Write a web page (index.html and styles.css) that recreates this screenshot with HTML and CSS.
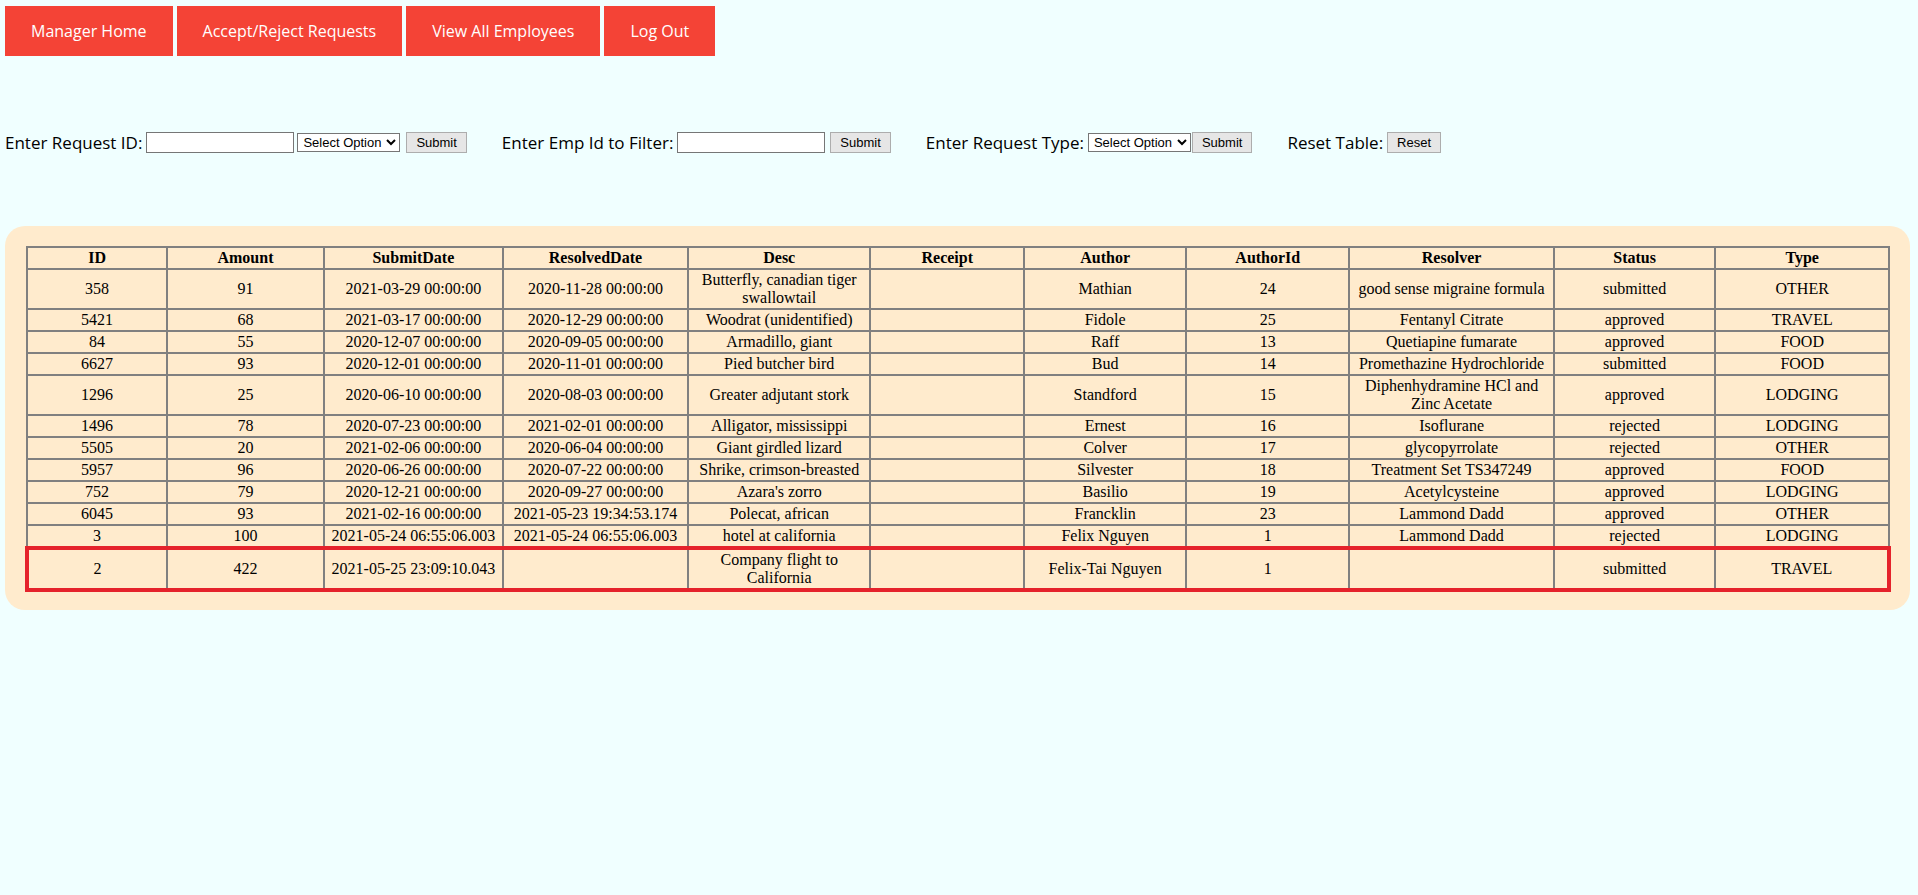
FILE: index.html
```html
<!DOCTYPE html>
<html>
<head>
<meta charset="utf-8">
<title>Manager - Requests</title>
<link rel="stylesheet" href="styles.css">
</head>
<body>
<nav class="nav">
  <a class="nav-btn" href="#">Manager Home</a>
  <a class="nav-btn" href="#">Accept/Reject Requests</a>
  <a class="nav-btn" href="#">View All Employees</a>
  <a class="nav-btn" href="#">Log Out</a>
</nav>

<div class="filters">
  <div class="group">
    <label class="lbl">Enter Request ID:</label>
    <input class="txt" type="text">
    <select class="sel sel-a"><option>Select Option</option></select>
    <button class="btn btn-a">Submit</button>
  </div>
  <div class="group">
    <label class="lbl">Enter Emp Id to Filter:</label>
    <input class="txt" type="text">
    <button class="btn btn-a">Submit</button>
  </div>
  <div class="group">
    <label class="lbl">Enter Request Type:</label>
    <select class="sel sel-b"><option>Select Option</option></select>
    <button class="btn">Submit</button>
  </div>
  <div class="group">
    <label class="lbl">Reset Table:</label>
    <button class="btn">Reset</button>
  </div>
</div>

<div class="panel">
  <table class="grid">
    <colgroup>
      <col class="c-id"><col class="c-amount"><col class="c-submit"><col class="c-resolved"><col class="c-desc"><col class="c-receipt"><col class="c-author"><col class="c-authorid"><col class="c-resolver"><col class="c-status"><col class="c-type">
    </colgroup>
    <thead>
      <tr><th>ID</th><th>Amount</th><th>SubmitDate</th><th>ResolvedDate</th><th>Desc</th><th>Receipt</th><th>Author</th><th>AuthorId</th><th>Resolver</th><th>Status</th><th>Type</th></tr>
    </thead>
    <tbody>
      <tr><td>358</td><td>91</td><td>2021-03-29 00:00:00</td><td>2020-11-28 00:00:00</td><td>Butterfly, canadian tiger swallowtail</td><td></td><td>Mathian</td><td>24</td><td>good sense migraine formula</td><td>submitted</td><td>OTHER</td></tr>
      <tr><td>5421</td><td>68</td><td>2021-03-17 00:00:00</td><td>2020-12-29 00:00:00</td><td>Woodrat (unidentified)</td><td></td><td>Fidole</td><td>25</td><td>Fentanyl Citrate</td><td>approved</td><td>TRAVEL</td></tr>
      <tr><td>84</td><td>55</td><td>2020-12-07 00:00:00</td><td>2020-09-05 00:00:00</td><td>Armadillo, giant</td><td></td><td>Raff</td><td>13</td><td>Quetiapine fumarate</td><td>approved</td><td>FOOD</td></tr>
      <tr><td>6627</td><td>93</td><td>2020-12-01 00:00:00</td><td>2020-11-01 00:00:00</td><td>Pied butcher bird</td><td></td><td>Bud</td><td>14</td><td>Promethazine Hydrochloride</td><td>submitted</td><td>FOOD</td></tr>
      <tr><td>1296</td><td>25</td><td>2020-06-10 00:00:00</td><td>2020-08-03 00:00:00</td><td>Greater adjutant stork</td><td></td><td>Standford</td><td>15</td><td>Diphenhydramine HCl and Zinc Acetate</td><td>approved</td><td>LODGING</td></tr>
      <tr><td>1496</td><td>78</td><td>2020-07-23 00:00:00</td><td>2021-02-01 00:00:00</td><td>Alligator, mississippi</td><td></td><td>Ernest</td><td>16</td><td>Isoflurane</td><td>rejected</td><td>LODGING</td></tr>
      <tr><td>5505</td><td>20</td><td>2021-02-06 00:00:00</td><td>2020-06-04 00:00:00</td><td>Giant girdled lizard</td><td></td><td>Colver</td><td>17</td><td>glycopyrrolate</td><td>rejected</td><td>OTHER</td></tr>
      <tr><td>5957</td><td>96</td><td>2020-06-26 00:00:00</td><td>2020-07-22 00:00:00</td><td>Shrike, crimson-breasted</td><td></td><td>Silvester</td><td>18</td><td>Treatment Set TS347249</td><td>approved</td><td>FOOD</td></tr>
      <tr><td>752</td><td>79</td><td>2020-12-21 00:00:00</td><td>2020-09-27 00:00:00</td><td>Azara's zorro</td><td></td><td>Basilio</td><td>19</td><td>Acetylcysteine</td><td>approved</td><td>LODGING</td></tr>
      <tr><td>6045</td><td>93</td><td>2021-02-16 00:00:00</td><td>2021-05-23 19:34:53.174</td><td>Polecat, african</td><td></td><td>Francklin</td><td>23</td><td>Lammond Dadd</td><td>approved</td><td>OTHER</td></tr>
      <tr><td>3</td><td>100</td><td>2021-05-24 06:55:06.003</td><td>2021-05-24 06:55:06.003</td><td>hotel at california</td><td></td><td>Felix Nguyen</td><td>1</td><td>Lammond Dadd</td><td>rejected</td><td>LODGING</td></tr>
      <tr class="highlight"><td>2</td><td>422</td><td>2021-05-25 23:09:10.043</td><td></td><td>Company flight to California</td><td></td><td>Felix-Tai Nguyen</td><td>1</td><td></td><td>submitted</td><td>TRAVEL</td></tr>
    </tbody>
  </table>
</div>
</body>
</html>
```

FILE: styles.css
```css
html, body {
  margin: 0;
  background: #f0ffff;
}

body {
  font-family: "Comic Sans MS", "Open Sans", sans-serif;
  color: #000;
}

.nav {
  display: flex;
  gap: 4px;
  padding: 6px 0 0 5px;
}

.nav-btn {
  display: block;
  background: #f44336;
  color: #fff;
  text-decoration: none;
  font-size: 16px;
  line-height: 22px;
  padding: 14px 26px;
}

.filters {
  display: flex;
  align-items: center;
  margin-top: 75px;
  padding-left: 5px;
  height: 22px;
}

.group {
  display: flex;
  align-items: center;
  margin-right: 35px;
}

.lbl {
  font-size: 17px;
  margin-right: 4px;
}

.txt {
  box-sizing: border-box;
  width: 148px;
  height: 21px;
  border: 1px solid #767676;
  background: #fff;
  margin: 0 3px 0 0;
  padding: 1px 2px;
}

.sel {
  box-sizing: border-box;
  width: 103px;
  height: 19px;
  font-family: "Liberation Sans", sans-serif;
  font-size: 13px;
  border: 1px solid #767676;
  background: #fff;
  margin: 0;
  padding: 0 1px;
}

.sel-a {
  margin-right: 4px;
}

.sel-b {
  margin-right: 1px;
}

.btn {
  box-sizing: border-box;
  height: 21px;
  font-family: "Liberation Sans", sans-serif;
  font-size: 13px;
  padding: 0 9px;
  background: #e6e6e6;
  border: 1px solid #adadad;
  color: #000;
  margin: 0;
}

.btn-a {
  margin-left: 2px;
}

.panel {
  margin: 73px 8px 0 5px;
  padding: 20px 19px 18px 20px;
  background: #ffebcd;
  border-radius: 20px;
}

.grid {
  width: 100%;
  table-layout: fixed;
  border-collapse: collapse;
  font-family: "Liberation Serif", "Times New Roman", serif;
  font-size: 16px;
}

.c-id { width: 7.53%; }
.c-amount { width: 8.41%; }
.c-submit { width: 9.62%; }
.c-resolved { width: 9.94%; }
.c-desc { width: 9.80%; }
.c-receipt { width: 8.25%; }
.c-author { width: 8.71%; }
.c-authorid { width: 8.76%; }
.c-resolver { width: 10.98%; }
.c-status { width: 8.68%; }
.c-type { width: 9.32%; }

.grid th,
.grid td {
  border: 2px solid #808080;
  padding: 1px;
  text-align: center;
}

.grid th {
  font-weight: bold;
}

.grid tr.highlight td {
  border-top: 4px solid #e5222b;
  border-bottom: 4px solid #e5222b;
}

.grid tr.highlight td:first-child {
  border-left: 4px solid #e5222b;
}

.grid tr.highlight td:last-child {
  border-right: 4px solid #e5222b;
}
```
